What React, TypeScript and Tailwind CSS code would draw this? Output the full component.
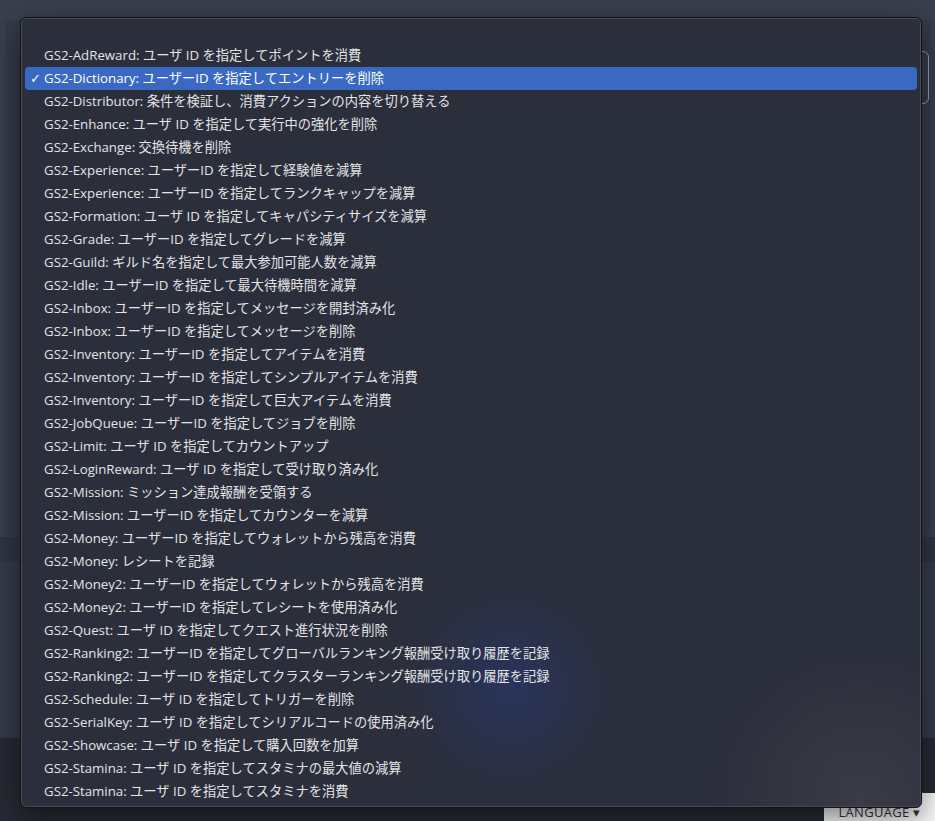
import React from "react";

const items = [
  "GS2-AdReward: ユーザ ID を指定してポイントを消費",
  "GS2-Dictionary: ユーザーID を指定してエントリーを削除",
  "GS2-Distributor: 条件を検証し、消費アクションの内容を切り替える",
  "GS2-Enhance: ユーザ ID を指定して実行中の強化を削除",
  "GS2-Exchange: 交換待機を削除",
  "GS2-Experience: ユーザーID を指定して経験値を減算",
  "GS2-Experience: ユーザーID を指定してランクキャップを減算",
  "GS2-Formation: ユーザ ID を指定してキャパシティサイズを減算",
  "GS2-Grade: ユーザーID を指定してグレードを減算",
  "GS2-Guild: ギルド名を指定して最大参加可能人数を減算",
  "GS2-Idle: ユーザーID を指定して最大待機時間を減算",
  "GS2-Inbox: ユーザーID を指定してメッセージを開封済み化",
  "GS2-Inbox: ユーザーID を指定してメッセージを削除",
  "GS2-Inventory: ユーザーID を指定してアイテムを消費",
  "GS2-Inventory: ユーザーID を指定してシンプルアイテムを消費",
  "GS2-Inventory: ユーザーID を指定して巨大アイテムを消費",
  "GS2-JobQueue: ユーザーID を指定してジョブを削除",
  "GS2-Limit: ユーザ ID を指定してカウントアップ",
  "GS2-LoginReward: ユーザ ID を指定して受け取り済み化",
  "GS2-Mission: ミッション達成報酬を受領する",
  "GS2-Mission: ユーザーID を指定してカウンターを減算",
  "GS2-Money: ユーザーID を指定してウォレットから残高を消費",
  "GS2-Money: レシートを記録",
  "GS2-Money2: ユーザーID を指定してウォレットから残高を消費",
  "GS2-Money2: ユーザーID を指定してレシートを使用済み化",
  "GS2-Quest: ユーザ ID を指定してクエスト進行状況を削除",
  "GS2-Ranking2: ユーザーID を指定してグローバルランキング報酬受け取り履歴を記録",
  "GS2-Ranking2: ユーザーID を指定してクラスターランキング報酬受け取り履歴を記録",
  "GS2-Schedule: ユーザ ID を指定してトリガーを削除",
  "GS2-SerialKey: ユーザ ID を指定してシリアルコードの使用済み化",
  "GS2-Showcase: ユーザ ID を指定して購入回数を加算",
  "GS2-Stamina: ユーザ ID を指定してスタミナの最大値の減算",
  "GS2-Stamina: ユーザ ID を指定してスタミナを消費",
];

const selected = 1;

const App = () => {
  return (
    <div className="relative w-[935px] h-[821px] overflow-hidden bg-[#3a3f4e] font-['Open_Sans','Noto_Sans_CJK_JP',sans-serif]">
      {/* page behind the menu */}
      <div className="flex flex-col h-full">
        <div className="h-[537px] px-[5px] flex">
          <div className="flex-1 mt-[20px] rounded-b-[8px] bg-[#363b4a]" />
        </div>
        <div className="h-[25px] bg-[#303543]" />
        <div className="h-[176px] bg-[#353b4b]" />
        <div className="flex-1 bg-[#262a33] flex justify-end items-end">
          <div className="w-[111px] h-[28px] bg-[#fafafa] flex items-end justify-center text-[13px] leading-[18px] text-[#333] tracking-wide">
            LANGUAGE ▾
          </div>
        </div>
      </div>

      {/* select behind */}
      <div className="absolute left-[905px] top-[51px] w-[24px] h-[53px] rounded-[6px] border border-[#9aa0ab]" />

      {/* dropdown menu */}
      <div className="absolute left-[20px] top-[17px] w-[902px] h-[791px] rounded-[6px] border border-[#101216] bg-[#2b2f3b] shadow-[inset_0_0_0_1px_#4a4d57,0_10px_30px_rgba(0,0,0,0.5)] overflow-hidden">
        <div className="absolute left-[380px] top-[560px] w-[220px] h-[220px] rounded-full bg-[radial-gradient(circle,rgba(40,55,120,0.55),rgba(40,55,120,0)_70%)]" />
        <div className="absolute right-[-120px] bottom-[-140px] w-[360px] h-[300px] rounded-full bg-[radial-gradient(circle,rgba(70,66,80,0.6),rgba(70,66,80,0)_65%)]" />
        <ul className="relative pt-[26px] px-[4px]">
          {items.map((label, i) => (
            <li
              key={i}
              className={
                i === selected
                  ? "h-[23px] flex items-center rounded-[4px] bg-[#3a69c4] text-white text-[13.25px]"
                  : "h-[23px] flex items-center text-[#e3e4e6] text-[13.25px]"
              }
            >
              <span className="w-[19px] pl-[5px] text-[13px] font-bold font-['DejaVu_Sans',sans-serif]">
                {i === selected ? "✓" : ""}
              </span>
              <span className="whitespace-nowrap">{label}</span>
            </li>
          ))}
        </ul>
      </div>
    </div>
  );
};

export default App;
